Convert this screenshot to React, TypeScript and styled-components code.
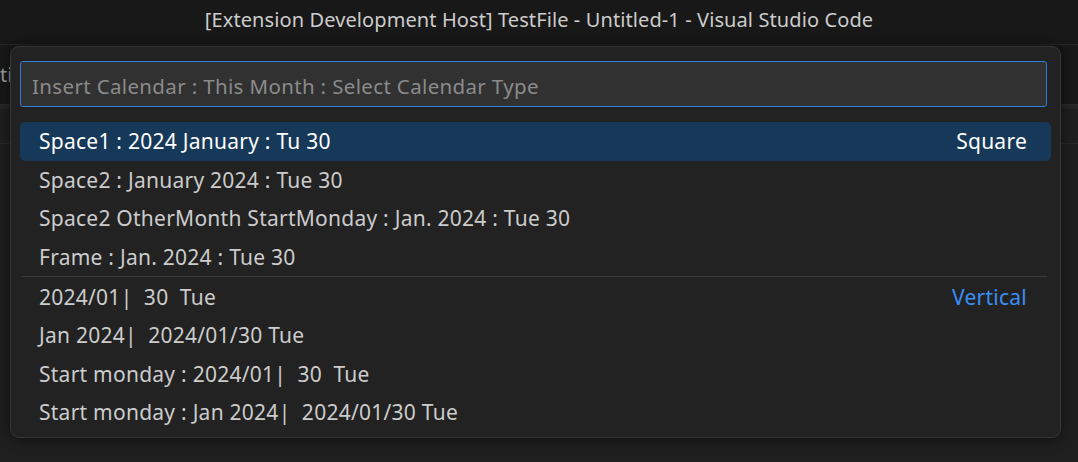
import React from 'react'
import styled, { createGlobalStyle } from 'styled-components'

const GlobalStyle = createGlobalStyle`
  html, body {
    margin: 0;
    padding: 0;
    background: #1f1f1f;
  }
  body {
    font-family: "Noto Sans", "Open Sans", sans-serif;
  }
`

const Window = styled.div`
  position: relative;
  width: 1078px;
  height: 462px;
  overflow: hidden;
  background: #1f1f1f;
  display: flex;
  flex-direction: column;
`

const TitleBar = styled.div`
  height: 45px;
  flex: 0 0 45px;
  background: #181818;
  border-bottom: 1px solid #2b2b2b;
  display: flex;
  align-items: center;
  justify-content: center;
  padding-bottom: 5px;
  box-sizing: border-box;
  color: #cccccc;
  font-size: 20px;
  letter-spacing: 0.1px;
`

const TabBar = styled.div`
  height: 59px;
  flex: 0 0 59px;
  background: #181818;
  border-bottom: 1px solid #2b2b2b;
  display: flex;
  align-items: center;
  color: #9d9d9d;
  font-size: 20px;
  overflow: hidden;
`

const TabLabel = styled.span`
  margin-left: 0;
`

const Breadcrumbs = styled.div`
  height: 34px;
  flex: 0 0 34px;
  border-top: 4px solid #262626;
  border-bottom: 1px solid #2b2b2b;
  background: #1f1f1f;
`

const Editor = styled.div`
  flex: 1;
  background: #1f1f1f;
`

const QuickPick = styled.div`
  position: absolute;
  left: 10px;
  top: 46px;
  width: 1051px;
  height: 392px;
  box-sizing: border-box;
  background: #222222;
  border: 1px solid #363636;
  border-radius: 9px;
  box-shadow: 0 0 14px rgba(0, 0, 0, 0.6);
  padding: 14px 12px 0 9px;
  display: flex;
  flex-direction: column;
`

const InputBox = styled.div`
  height: 46px;
  box-sizing: border-box;
  margin-right: 1px;
  background: #313131;
  border: 1px solid #2f7bd6;
  border-radius: 3px;
  display: flex;
  align-items: center;
  padding: 3px 0 0 11px;
  color: #8b8b8b;
  font-size: 20.5px;
  letter-spacing: 0.35px;
`

const List = styled.div`
  margin-top: 15px;
  display: flex;
  flex-direction: column;
`

const Row = styled.div<{ $selected?: boolean }>`
  height: 38.6px;
  box-sizing: border-box;
  display: flex;
  align-items: center;
  justify-content: space-between;
  padding: 0 24px 0 19px;
  margin-right: -3px;
  border-radius: 5px;
  background: ${(p) => (p.$selected ? '#163859' : 'transparent')};
  color: ${(p) => (p.$selected ? '#ffffff' : '#cccccc')};
  font-size: 21px;
  letter-spacing: 0.25px;
  white-space: pre;
`

const Separator = styled.div`
  height: 1px;
  margin: 0 1px 0 2px;
  background: #3a3a3a;
`

const GroupLabel = styled.span<{ $accent?: boolean }>`
  color: ${(p) => (p.$accent ? '#3a8ef5' : 'inherit')};
`

type Item = { label: string; group?: string; accent?: boolean }

const squareItems: Item[] = [
  { label: 'Space1 : 2024 January : Tu 30', group: 'Square' },
  { label: 'Space2 : January 2024 : Tue 30' },
  { label: 'Space2 OtherMonth StartMonday : Jan. 2024 : Tue 30' },
  { label: 'Frame : Jan. 2024 : Tue 30' },
]

const verticalItems: Item[] = [
  { label: '2024/01|  30  Tue', group: 'Vertical', accent: true },
  { label: 'Jan 2024|  2024/01/30 Tue' },
  { label: 'Start monday : 2024/01|  30  Tue' },
  { label: 'Start monday : Jan 2024|  2024/01/30 Tue' },
]

const App = () => {
  return (
    <>
      <GlobalStyle />
      <Window>
        <TitleBar>[Extension Development Host] TestFile - Untitled-1 - Visual Studio Code</TitleBar>
        <TabBar>
          <TabLabel>ti</TabLabel>
        </TabBar>
        <Breadcrumbs />
        <Editor />
        <QuickPick>
          <InputBox>Insert Calendar : This Month : Select Calendar Type</InputBox>
          <List>
            {squareItems.map((item, i) => (
              <Row key={item.label} $selected={i === 0}>
                <span>{item.label}</span>
                {item.group && <GroupLabel>{item.group}</GroupLabel>}
              </Row>
            ))}
            <Separator />
            {verticalItems.map((item) => (
              <Row key={item.label}>
                <span>{item.label}</span>
                {item.group && <GroupLabel $accent={item.accent}>{item.group}</GroupLabel>}
              </Row>
            ))}
          </List>
        </QuickPick>
      </Window>
    </>
  )
}

export default App
